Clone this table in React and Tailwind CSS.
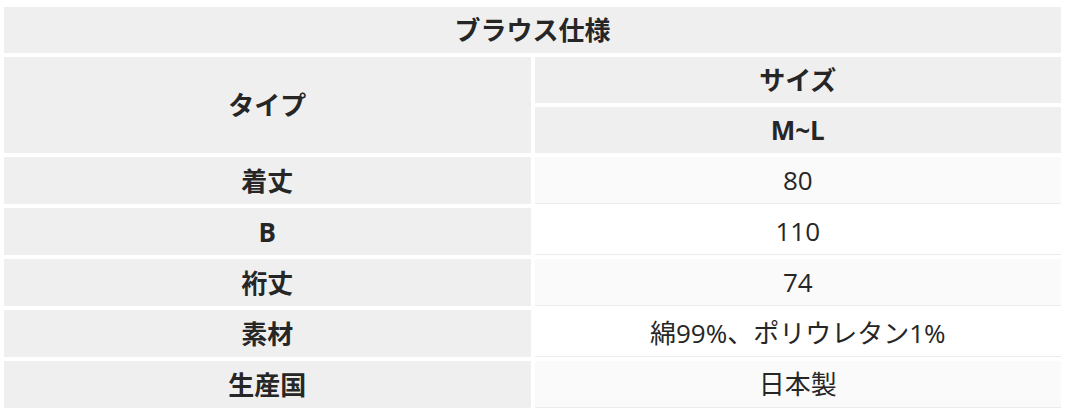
import React from 'react';

const rows = [
  { label: '着丈', value: '80' },
  { label: 'B', value: '110' },
  { label: '裄丈', value: '74' },
  { label: '素材', value: '綿99%、ポリウレタン1%' },
  { label: '生産国', value: '日本製' },
];

const App = () => {
  return (
    <div
      className="min-h-screen bg-white pt-[3px] text-[#262626]"
      style={{ fontFamily: '"Open Sans", "Noto Sans CJK JP", sans-serif' }}
    >
      <table className="w-full table-fixed border-separate border-spacing-[4px] text-[26px] leading-none">
        <thead>
          <tr>
            <th colSpan={2} className="h-[46px] bg-[#efefef] text-center font-bold">
              ブラウス仕様
            </th>
          </tr>
          <tr>
            <th rowSpan={2} className="w-1/2 bg-[#efefef] text-center font-bold">
              タイプ
            </th>
            <th className="h-[46px] bg-[#efefef] text-center font-bold">サイズ</th>
          </tr>
          <tr>
            <th className="h-[46px] bg-[#efefef] text-center font-bold">M~L</th>
          </tr>
        </thead>
        <tbody>
          {rows.map((row, i) => (
            <tr key={row.label}>
              <th className="h-[47px] bg-[#efefef] text-center font-bold">{row.label}</th>
              <td
                className={`h-[47px] border-b border-[#ececec] text-center font-normal ${
                  i % 2 === 0 ? 'bg-[#fafafa]' : 'bg-white'
                }`}
              >
                {row.value}
              </td>
            </tr>
          ))}
        </tbody>
      </table>
    </div>
  );
};

export default App;
